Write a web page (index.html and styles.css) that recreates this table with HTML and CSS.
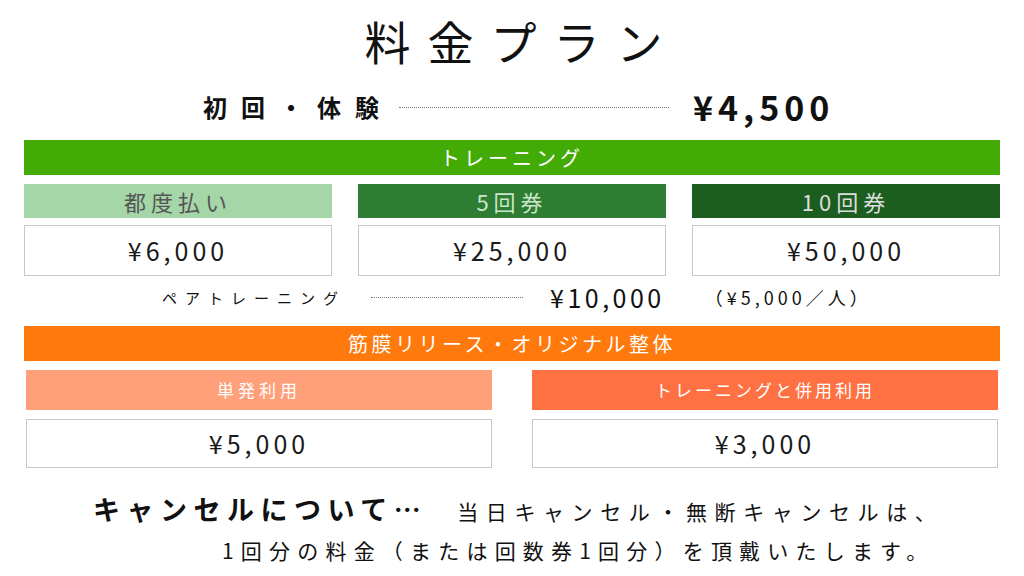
FILE: index.html
```html
<!DOCTYPE html>
<html lang="ja">
<head>
    <meta charset="UTF-8">
    <meta name="viewport" content="width=device-width, initial-scale=1.0">
    <title>料金プラン</title>
    <link rel="stylesheet" href="styles.css">
</head>
<body>

    <h1 class="title">料金プラン</h1>

    <div class="trial">
        <span class="trial-label">初回・体験</span>
        <span class="dots trial-dots"></span>
        <span class="trial-price">¥4,500</span>
    </div>

    <div class="bar bar-green">トレーニング</div>
    <div class="grid3">
        <div class="head head-light">都度払い</div>
        <div class="head head-mid">5回券</div>
        <div class="head head-dark">10回券</div>
        <div class="price">¥6,000</div>
        <div class="price">¥25,000</div>
        <div class="price">¥50,000</div>
    </div>

    <div class="pair">
        <span class="pair-label">ペアトレーニング</span>
        <span class="dots pair-dots"></span>
        <span class="pair-price">¥10,000</span>
        <span class="pair-note">（¥5,000／人）</span>
    </div>

    <div class="bar bar-orange">筋膜リリース・オリジナル整体</div>
    <div class="grid2">
        <div class="head head-salmon">単発利用</div>
        <div class="head head-coral">トレーニングと併用利用</div>
        <div class="price price-sm">¥5,000</div>
        <div class="price price-sm">¥3,000</div>
    </div>

    <div class="cancel">
        <p class="cancel-line1"><b>キャンセルについて…</b><span>当日キャンセル・無断キャンセルは、</span></p>
        <p class="cancel-line2">1回分の料金（または回数券1回分）を頂戴いたします。</p>
    </div>

</body>
</html>
```

FILE: styles.css
```css
body {
    margin: 0;
    width: 1024px;
    font-family: "Noto Sans CJK JP", "Noto Sans", sans-serif;
    color: #111;
    background: #fff;
}

.title {
    margin: 8px 0 0;
    height: 64px;
    line-height: 64px;
    text-align: center;
    font-size: 46px;
    font-weight: 400;
    letter-spacing: 17px;
    padding-left: 20px;
}

.trial {
    height: 68px;
    display: flex;
    align-items: center;
    padding-left: 203px;
}
.trial-label {
    font-size: 24px;
    font-weight: 700;
    letter-spacing: 14px;
}
.dots {
    display: block;
    border-top: 1px dotted #777;
}
.trial-dots {
    width: 270px;
    margin: 2px 24px 0 6px;
}
.trial-price {
    font-size: 34px;
    font-weight: 700;
    letter-spacing: 5px;
}

.bar {
    margin: 0 24px;
    height: 35px;
    line-height: 35px;
    text-align: center;
    color: #fff;
    font-size: 20px;
    letter-spacing: 4px;
}
.bar-green { background: #43ab06; }
.bar-orange { background: #ff790c; letter-spacing: 3.5px; }

.grid3 {
    display: grid;
    grid-template-columns: repeat(3, 1fr);
    column-gap: 26px;
    row-gap: 7px;
    margin: 9px 24px 0;
}
.grid2 {
    display: grid;
    grid-template-columns: 1fr 1fr;
    column-gap: 40px;
    row-gap: 9px;
    margin: 9px 26px 0;
}

.head {
    height: 34px;
    line-height: 34px;
    text-align: center;
    font-size: 22px;
    letter-spacing: 5px;
}
.head-light { background: #a5d6a7; color: #555; }
.head-mid { background: #2e7d32; color: #c8e6c9; }
.head-dark { background: #1b5e20; color: #ddd; }
.grid2 .head {
    height: 40px;
    line-height: 40px;
    font-size: 17px;
    letter-spacing: 4px;
    color: #fff;
}
.head-salmon { background: #ffa07a; }
.head-coral { background: #ff7043; letter-spacing: 3px !important; }

.price {
    height: 49px;
    line-height: 49px;
    border: 1px solid #c8c8c8;
    text-align: center;
    font-size: 25px;
    letter-spacing: 4px;
    color: #1a1a1a;
}
.price-sm { height: 47px; line-height: 47px; }

.pair {
    height: 42px;
    padding-bottom: 8px;
    display: flex;
    align-items: center;
    padding-left: 162px;
}
.pair-label {
    font-size: 15px;
    letter-spacing: 8px;
}
.pair-dots {
    width: 152px;
    margin: 0 27px 0 25px;
}
.pair-price {
    font-size: 25px;
    letter-spacing: 3.5px;
}
.pair-note {
    font-size: 18px;
    letter-spacing: 4px;
    margin-left: 40px;
}

.cancel {
    margin-top: 20px;
}
.cancel p {
    margin: 0;
}
.cancel-line1 {
    display: flex;
    align-items: baseline;
    padding-left: 93px;
    height: 42px;
    line-height: 42px;
}
.cancel-line1 b {
    font-size: 27px;
    letter-spacing: 6.5px;
}
.cancel-line1 span {
    margin-left: 30px;
    font-size: 21px;
    letter-spacing: 7.6px;
}
.cancel-line2 {
    padding-left: 222px;
    font-size: 21px;
    letter-spacing: 7.2px;
    height: 40px;
    line-height: 40px;
}
```
